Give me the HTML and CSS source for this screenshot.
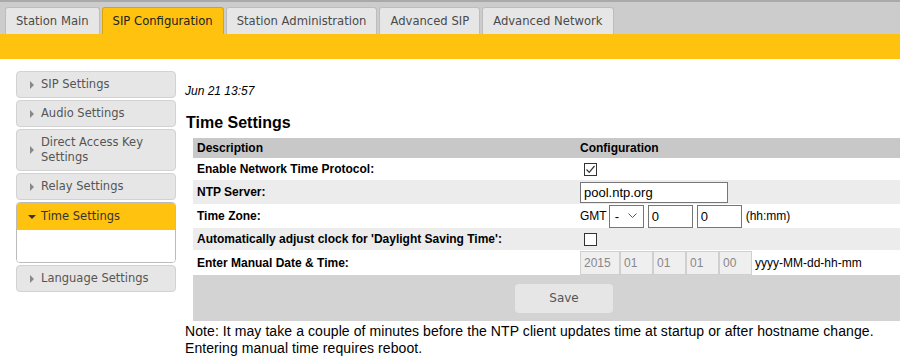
FILE: index.html
```html
<!DOCTYPE html>
<html lang="en">
<head>
    <meta charset="UTF-8">
    <title>Time Settings</title>
    <link rel="stylesheet" href="styles.css">
</head>
<body>
    <div class="topbar">
        <div class="tabs">
            <div class="tab">Station Main</div>
            <div class="tab active">SIP Configuration</div>
            <div class="tab">Station Administration</div>
            <div class="tab">Advanced SIP</div>
            <div class="tab">Advanced Network</div>
        </div>
    </div>
    <div class="band"></div>

    <div class="page">
        <div class="sidebar">
            <div class="menu-item"><span class="arrow"></span>SIP Settings</div>
            <div class="menu-item"><span class="arrow"></span>Audio Settings</div>
            <div class="menu-item"><span class="arrow"></span>Direct Access Key<br>Settings</div>
            <div class="menu-item"><span class="arrow"></span>Relay Settings</div>
            <div class="menu-group">
                <div class="menu-item open"><span class="arrow down"></span>Time Settings</div>
                <div class="menu-body"></div>
            </div>
            <div class="menu-item"><span class="arrow"></span>Language Settings</div>
        </div>

        <div class="content">
            <p class="clock">Jun 21 13:57</p>
            <h2>Time Settings</h2>
            <table class="settings">
                <tr class="head">
                    <td class="desc">Description</td>
                    <td>Configuration</td>
                </tr>
                <tr class="row-a">
                    <td class="desc">Enable Network Time Protocol:</td>
                    <td>
                        <span class="check">
                            <svg width="11" height="11" viewBox="0 0 11 11"><path d="M1.5 5.5 L4.2 8.3 L9.5 2" fill="none" stroke="#333" stroke-width="1.2"/></svg>
                        </span>
                    </td>
                </tr>
                <tr class="row-b">
                    <td class="desc">NTP Server:</td>
                    <td><input type="text" class="ntp" value="pool.ntp.org"></td>
                </tr>
                <tr class="row-a tall">
                    <td class="desc">Time Zone:</td>
                    <td>
                        <div class="zone">
                            <span>GMT</span>
                            <span class="select">-
                                <svg width="9" height="6" viewBox="0 0 9 6"><path d="M0.5 0.5 L4.5 4.5 L8.5 0.5" fill="none" stroke="#555" stroke-width="1"/></svg>
                            </span>
                            <input type="text" class="small" value="0">
                            <input type="text" class="small" value="0">
                            <span>(hh:mm)</span>
                        </div>
                    </td>
                </tr>
                <tr class="row-b short">
                    <td class="desc">Automatically adjust clock for 'Daylight Saving Time':</td>
                    <td><span class="check"></span></td>
                </tr>
                <tr class="row-c">
                    <td class="desc">Enter Manual Date &amp; Time:</td>
                    <td>
                        <div class="manual">
                            <input type="text" class="year" value="2015" disabled>
                            <input type="text" class="part" value="01" disabled>
                            <input type="text" class="part" value="01" disabled>
                            <input type="text" class="part" value="01" disabled>
                            <input type="text" class="part" value="00" disabled>
                            <span class="fmt">yyyy-MM-dd-hh-mm</span>
                        </div>
                    </td>
                </tr>
                <tr class="save-row">
                    <td colspan="2"><button type="button">Save</button></td>
                </tr>
            </table>
            <p class="note">Note: It may take a couple of minutes before the NTP client updates time at startup or after hostname change.<br>Entering manual time requires reboot.</p>
        </div>
    </div>
</body>
</html>
```

FILE: styles.css
```css
body {
    margin: 0;
    padding: 0;
    font-family: "Liberation Sans", Arial, sans-serif;
    background: #ffffff;
    color: #000;
    overflow: hidden;
}

.topbar {
    border-top: 2px solid #a9a9a9;
    background-color: #cccccc;
    height: 32px;
    display: flex;
    align-items: flex-end;
}
.tabs {
    display: flex;
    padding-left: 5px;
    gap: 2px;
}
.tab {
    height: 26px;
    line-height: 27px;
    padding: 0 10px;
    font-family: "DejaVu Sans", Verdana, sans-serif;
    font-size: 11.6px;
    color: #4a4a4a;
    background-color: #e6e6e6;
    border: 1px solid #bdbdbd;
    border-bottom: none;
    border-radius: 3px 3px 0 0;
}
.tab.active {
    background-color: #ffc20e;
    border-color: #d8a40a;
    color: #222;
}
.band {
    height: 25px;
    background-color: #ffc20e;
}

.page {
    display: flex;
    align-items: flex-start;
}

.sidebar {
    width: 160px;
    flex-shrink: 0;
    margin: 12px 0 0 16px;
    display: flex;
    flex-direction: column;
    gap: 2px;
}
.menu-item {
    position: relative;
    padding: 5px 6px 5px 24px;
    font-family: "DejaVu Sans", Verdana, sans-serif;
    font-size: 11.5px;
    line-height: 15px;
    color: #555;
    background-color: #e6e6e6;
    border: 1px solid #d2d2d2;
    border-radius: 4px;
}
.arrow {
    position: absolute;
    left: 13px;
    top: 50%;
    margin-top: -4px;
    width: 0;
    height: 0;
    border-top: 4px solid transparent;
    border-bottom: 4px solid transparent;
    border-left: 4px solid #888;
}
.arrow.down {
    left: 11px;
    margin-top: -2px;
    border-left: 4px solid transparent;
    border-right: 4px solid transparent;
    border-top: 4px solid #333;
    border-bottom: none;
}
.menu-group {
    border: 1px solid #bbb;
    border-radius: 4px;
    overflow: hidden;
}
.menu-group .menu-item {
    border: none;
    border-radius: 0;
    background-color: #ffc20e;
    color: #333;
    padding-top: 6px;
    padding-bottom: 6px;
}
.menu-body {
    height: 32px;
    background: #fff;
}

.content {
    margin-left: 9px;
    flex: 1;
    min-width: 0;
}
.clock {
    margin: 25px 0 0 0;
    font-size: 12px;
    font-style: italic;
}
h2 {
    margin: 16px 0 6px 1px;
    font-size: 16px;
    font-weight: bold;
}

.settings {
    margin-left: 8px;
    width: 720px;
    border-collapse: collapse;
    font-size: 12px;
}
.settings td {
    padding: 0 4px;
}
.settings td.desc {
    width: 375px;
    font-weight: bold;
}
.head {
    background-color: #c8c8c8;
    font-weight: bold;
    height: 20px;
}
.row-a {
    background: #ffffff;
    height: 22px;
}
.row-b {
    background: #ececec;
    height: 24px;
}
.row-a.tall {
    height: 24px;
}
.row-b.short {
    height: 22px;
}
.row-c {
    background: #ffffff;
    height: 25px;
}
.save-row {
    background-color: #d3d3d3;
    height: 46px;
}
.save-row td {
    text-align: center;
    padding: 0 0 0 22px;
}

.check {
    display: inline-flex;
    align-items: center;
    justify-content: center;
    width: 11px;
    height: 11px;
    border: 1px solid #333;
    background: #fff;
    margin-left: 4px;
    vertical-align: middle;
}

input[type="text"] {
    font-family: "Liberation Sans", Arial, sans-serif;
    font-size: 13px;
    border: 1px solid #767676;
    padding: 1px 3px;
    height: 21px;
    box-sizing: border-box;
    margin: 0;
}
.ntp {
    width: 148px;
    height: 23px;
}
.zone {
    display: flex;
    align-items: center;
    gap: 4px;
    font-size: 12px;
}
.select {
    display: inline-flex;
    align-items: center;
    justify-content: space-between;
    width: 35px;
    height: 23px;
    box-sizing: border-box;
    border: 1px solid #767676;
    padding: 0 6px 0 5px;
    font-size: 13px;
    margin-left: -2px;
}
.small {
    width: 45px;
    height: 23px !important;
}
.manual {
    display: flex;
    align-items: center;
}
.manual input {
    background: #efefef;
    color: #888;
    border: 1px solid #d0d0d0;
    height: 24px;
    font-size: 12px;
}
.year {
    width: 40px;
}
.part {
    width: 33px;
}
.fmt {
    margin-left: 3px;
    font-size: 12px;
}

button {
    width: 98px;
    height: 29px;
    border: none;
    border-radius: 4px;
    background-color: #e6e6e6;
    color: #555;
    font-family: "DejaVu Sans", Verdana, sans-serif;
    font-size: 12px;
    cursor: pointer;
}

.note {
    margin: 2px 0 0 0;
    font-size: 14px;
    line-height: 17px;
    letter-spacing: 0.08px;
    white-space: nowrap;
}
```
